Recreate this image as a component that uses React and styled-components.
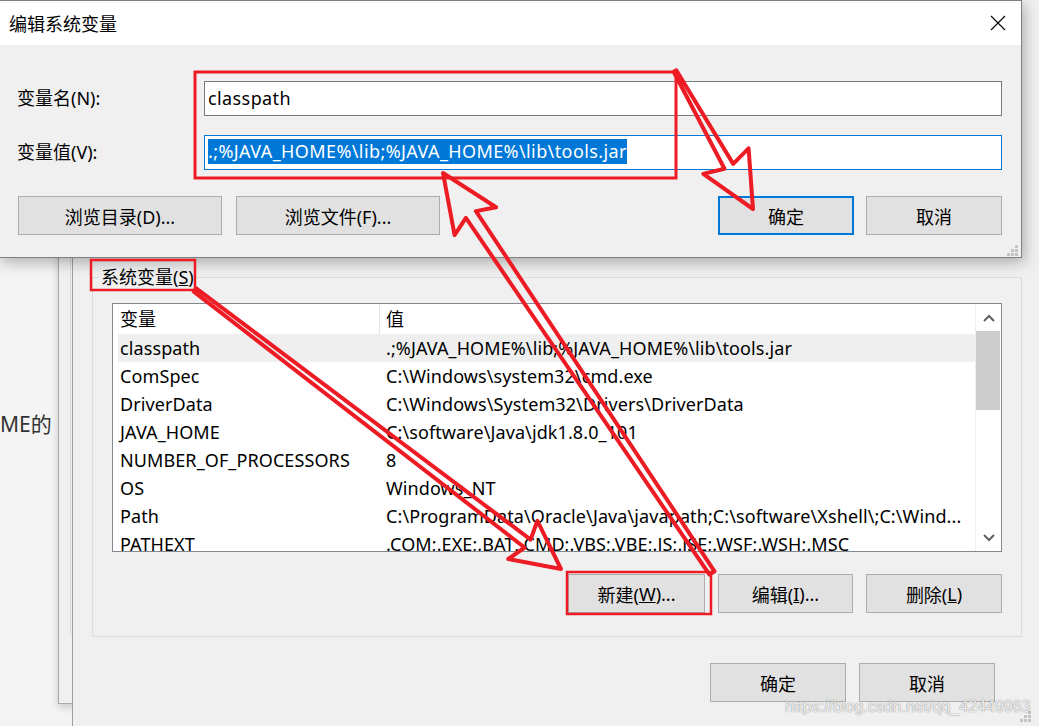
import React from "react";
import styled, { createGlobalStyle } from "styled-components";

const FONT = `"Segoe UI", "Noto Sans", "Noto Sans CJK SC", sans-serif`;
const RED = "#ed1c24";

const Global = createGlobalStyle`
  html, body { margin: 0; padding: 0; }
  body {
    width: 1039px; height: 726px; overflow: hidden;
    background: #f4f4f4; font-family: ${FONT}; color: #000;
  }
`;

const Desktop = styled.div`
  position: relative;
  width: 1039px;
  height: 726px;
  overflow: hidden;
  background: #f4f4f4;
`;

/* ---------- page behind ---------- */
const BackPage = styled.div`
  padding-top: 409px;
`;
const BackText = styled.p`
  margin: 0;
  font-size: 21px;
  line-height: 30px;
  color: #333;
`;

/* ---------- window A (behind) ---------- */
const WindowA = styled.div`
  position: absolute;
  left: 58px;
  top: 0;
  width: 200px;
  height: 704px;
  box-sizing: border-box;
  border-left: 1px solid #a9a9a9;
  border-bottom: 1px solid #a9a9a9;
  background: #f0f0f0;
  box-shadow: 0 3px 8px rgba(0, 0, 0, 0.18);
  z-index: 1;
`;
const InnerEdge = styled.div`
  margin-left: 11px;
  height: 635px;
  border-left: 1px solid #dadada;
`;

/* ---------- env vars window ---------- */
const EnvWindow = styled.div`
  position: absolute;
  left: 72px;
  top: 0;
  width: 1000px;
  height: 760px;
  box-sizing: border-box;
  border-left: 1px solid #a0a0a0;
  background: #f0f0f0;
  padding: 264px 0 0 19px;
  z-index: 2;
`;
const EnvContent = styled.div`
  width: 930px;
  display: flex;
  flex-direction: column;
`;
const GroupBox = styled.fieldset`
  margin: 0;
  min-width: 0;
  width: 930px;
  box-sizing: border-box;
  padding: 13px 19px 23px;
  border: 1px solid #dcdcdc;
`;
const GroupLegend = styled.legend`
  padding: 0 2px;
  margin-left: -13px;
  font-size: 18px;
  line-height: 26px;
  height: 26px;
`;
const ListView = styled.div`
  display: flex;
  width: 890px;
  height: 249px;
  box-sizing: border-box;
  border: 1px solid #828790;
  background: #fff;
`;
const ListMain = styled.div`
  flex: 1;
  min-width: 0;
  overflow: hidden;
  padding-left: 5px;
`;
const HeaderRow = styled.div`
  display: grid;
  grid-template-columns: 262px 1fr;
  height: 30px;
  font-size: 18px;
  line-height: 30px;
`;
const HeaderCell = styled.div`
  padding-left: ${(p) => (p.$first ? "2px" : "6px")};
  border-right: ${(p) => (p.$first ? "1px solid #e5e5e5" : "none")};
`;
const Row = styled.div`
  display: grid;
  grid-template-columns: 262px 1fr;
  height: 28px;
  line-height: 28px;
  font-size: 18px;
  letter-spacing: 0.1px;
  background: ${(p) => (p.$selected ? "#efefef" : "transparent")};
`;
const Cell = styled.div`
  padding-left: ${(p) => (p.$first ? "2px" : "6px")};
  white-space: nowrap;
  overflow: hidden;
`;
const ScrollBar = styled.div`
  width: 26px;
  display: flex;
  flex-direction: column;
  background: #fff;
  border-left: 1px solid #f0f0f0;
  box-sizing: border-box;
`;
const ScrollArrow = styled.div`
  height: 27px;
  display: flex;
  align-items: center;
  justify-content: center;
`;
const ScrollTrack = styled.div`
  flex: 1;
  padding: 0 1px 0 0;
`;
const ScrollThumb = styled.div`
  height: 79px;
  background: #cdcdcd;
`;
const ButtonRow = styled.div`
  display: flex;
  justify-content: flex-end;
  gap: 13px;
  margin-top: 22px;
`;
const Footer = styled.div`
  display: flex;
  justify-content: flex-end;
  gap: 13px;
  margin-top: 26px;
  padding-right: 27px;
`;
const Button = styled.div`
  width: ${(p) => p.$w || 136}px;
  height: 39px;
  box-sizing: border-box;
  border: ${(p) => (p.$primary ? "2px solid #0078d7" : "1px solid #adadad")};
  background: #e1e1e1;
  font-size: 18px;
  display: flex;
  align-items: center;
  justify-content: center;
  white-space: nowrap;
`;

/* ---------- edit dialog ---------- */
const Dialog = styled.div`
  position: absolute;
  left: -1px;
  top: 0;
  width: 1023px;
  height: 258px;
  box-sizing: border-box;
  border: 1px solid #808080;
  background: #f0f0f0;
  box-shadow: 2px 4px 14px rgba(0, 0, 0, 0.3);
  display: flex;
  flex-direction: column;
  z-index: 3;
`;
const TitleBar = styled.div`
  height: 44px;
  flex: none;
  background: #fff;
  display: flex;
  align-items: center;
  justify-content: space-between;
  padding-left: 9px;
`;
const Title = styled.div`
  font-size: 18px;
`;
const CloseButton = styled.div`
  width: 46px;
  height: 44px;
  display: flex;
  align-items: center;
  justify-content: center;
`;
const DialogBody = styled.div`
  flex: 1;
  padding: 36px 19px 0 17px;
`;
const FieldGrid = styled.div`
  display: grid;
  grid-template-columns: 187px 798px;
  row-gap: 19px;
  align-items: center;
`;
const Label = styled.div`
  font-size: 18px;
  padding-bottom: 3px;
`;
const TextInput = styled.div`
  height: 35px;
  box-sizing: border-box;
  border: 1px solid ${(p) => (p.$focused ? "#0078d7" : "#7a7a7a")};
  background: #fff;
  padding: 0 0 2px 3px;
  display: flex;
  align-items: center;
  font-size: 18px;
  letter-spacing: 0.4px;
  white-space: nowrap;
  overflow: hidden;
`;
const Selected = styled.span`
  display: inline-block;
  background: #0078d7;
  color: #fff;
  line-height: 25px;
`;
const DialogButtons = styled.div`
  display: flex;
  justify-content: space-between;
  margin-top: 26px;
  padding-left: 1px;
`;
const ButtonGroup = styled.div`
  display: flex;
  gap: ${(p) => p.$gap}px;
`;
const Grip = styled.svg`
  position: absolute;
  right: ${(p) => p.$r}px;
  bottom: ${(p) => p.$b}px;
`;
const GripFree = styled.svg`
  position: absolute;
  left: 1020px;
  top: 711px;
  z-index: 4;
`;
const Watermark = styled.div`
  position: absolute;
  left: 785px;
  top: 695px;
  font-family: "Liberation Sans", Arial, sans-serif;
  font-size: 16px;
  line-height: 24px;
  color: rgba(255, 255, 255, 0.85);
  text-shadow: 0 0 1px rgba(0, 0, 0, 0.45), 0 0 2px rgba(0, 0, 0, 0.15);
  z-index: 6;
`;
const Overlay = styled.svg`
  position: absolute;
  left: 0;
  top: 0;
  pointer-events: none;
  z-index: 10;
`;

/* ---------- helpers ---------- */
function hollowArrow([tx, ty], [px, py], { tail, shaft, head, len, notch }) {
  const dx = px - tx;
  const dy = py - ty;
  const L = Math.hypot(dx, dy);
  const ux = dx / L;
  const uy = dy / L;
  const nx = -uy;
  const ny = ux;
  const bx = px - ux * len;
  const by = py - uy * len;
  const jx = bx + ux * notch;
  const jy = by + uy * notch;
  const pts = [
    [tx + nx * tail, ty + ny * tail],
    [jx + nx * shaft, jy + ny * shaft],
    [bx + nx * head, by + ny * head],
    [px, py],
    [bx - nx * head, by - ny * head],
    [jx - nx * shaft, jy - ny * shaft],
    [tx - nx * tail, ty - ny * tail],
  ];
  return pts.map((p) => p.map((v) => v.toFixed(1)).join(",")).join(" ");
}

const GripDots = () => (
  <>
    <rect x="8" y="0" width="3" height="3" fill="#c3c3c3" />
    <rect x="4" y="4" width="3" height="3" fill="#c3c3c3" />
    <rect x="8" y="4" width="3" height="3" fill="#c3c3c3" />
    <rect x="0" y="8" width="3" height="3" fill="#c3c3c3" />
    <rect x="4" y="8" width="3" height="3" fill="#c3c3c3" />
    <rect x="8" y="8" width="3" height="3" fill="#c3c3c3" />
  </>
);

const Chevron = ({ up }) => (
  <svg width="12" height="8" viewBox="0 0 12 8">
    <polyline
      points={up ? "1,7 6,2 11,7" : "1,1 6,6 11,1"}
      fill="none"
      stroke="#606060"
      strokeWidth="2"
    />
  </svg>
);

const rows = [
  ["classpath", ".;%JAVA_HOME%\\lib;%JAVA_HOME%\\lib\\tools.jar"],
  ["ComSpec", "C:\\Windows\\system32\\cmd.exe"],
  ["DriverData", "C:\\Windows\\System32\\Drivers\\DriverData"],
  ["JAVA_HOME", "C:\\software\\Java\\jdk1.8.0_101"],
  ["NUMBER_OF_PROCESSORS", "8"],
  ["OS", "Windows_NT"],
  ["Path", "C:\\ProgramData\\Oracle\\Java\\javapath;C:\\software\\Xshell\\;C:\\Wind..."],
  ["PATHEXT", ".COM;.EXE;.BAT;.CMD;.VBS;.VBE;.JS;.JSE;.WSF;.WSH;.MSC"],
];

export default function App() {
  const arrowA = hollowArrow([675, 71], [753, 209], { tail: 1.5, shaft: 5, head: 26, len: 55, notch: 6 });
  const arrowB = hollowArrow([712, 573], [443, 173], { tail: 3, shaft: 6, head: 25, len: 58, notch: 8 });
  const arrowC = hollowArrow([195, 290], [561, 569], { tail: 2, shaft: 5, head: 24, len: 48, notch: 6 });

  return (
    <Desktop>
      <Global />
      <BackPage>
        <BackText>ME的</BackText>
      </BackPage>

      <WindowA>
        <InnerEdge />
      </WindowA>

      <EnvWindow>
        <EnvContent>
          <GroupBox>
            <GroupLegend>
              系统变量(<u>S</u>)
            </GroupLegend>
            <ListView>
              <ListMain>
                <HeaderRow>
                  <HeaderCell $first>变量</HeaderCell>
                  <HeaderCell>值</HeaderCell>
                </HeaderRow>
                {rows.map(([k, v], i) => (
                  <Row key={k} $selected={i === 0}>
                    <Cell $first>{k}</Cell>
                    <Cell>{v}</Cell>
                  </Row>
                ))}
              </ListMain>
              <ScrollBar>
                <ScrollArrow>
                  <Chevron up />
                </ScrollArrow>
                <ScrollTrack>
                  <ScrollThumb />
                </ScrollTrack>
                <ScrollArrow>
                  <Chevron />
                </ScrollArrow>
              </ScrollBar>
            </ListView>
            <ButtonRow>
              <Button $w={137}>
                新建(<u>W</u>)...
              </Button>
              <Button $w={135}>
                编辑(<u>I</u>)...
              </Button>
              <Button $w={136}>
                删除(<u>L</u>)
              </Button>
            </ButtonRow>
          </GroupBox>
          <Footer>
            <Button $w={136}>确定</Button>
            <Button $w={136}>取消</Button>
          </Footer>
        </EnvContent>
      </EnvWindow>
      <GripFree width="11" height="11" viewBox="0 0 11 11">
        <GripDots />
      </GripFree>

      <Dialog>
        <TitleBar>
          <Title>编辑系统变量</Title>
          <CloseButton>
            <svg width="16" height="16" viewBox="0 0 16 16">
              <path d="M1 1 L15 15 M15 1 L1 15" stroke="#000" strokeWidth="1.1" />
            </svg>
          </CloseButton>
        </TitleBar>
        <DialogBody>
          <FieldGrid>
            <Label>变量名(N):</Label>
            <TextInput>classpath</TextInput>
            <Label>变量值(V):</Label>
            <TextInput $focused>
              <Selected>.;%JAVA_HOME%\lib;%JAVA_HOME%\lib\tools.jar</Selected>
            </TextInput>
          </FieldGrid>
          <DialogButtons>
            <ButtonGroup $gap={14}>
              <Button $w={204}>浏览目录(D)...</Button>
              <Button $w={204}>浏览文件(F)...</Button>
            </ButtonGroup>
            <ButtonGroup $gap={12}>
              <Button $w={136} $primary>
                确定
              </Button>
              <Button $w={136}>取消</Button>
            </ButtonGroup>
          </DialogButtons>
        </DialogBody>
        <Grip $r={3} $b={1} width="11" height="11" viewBox="0 0 11 11">
          <GripDots />
        </Grip>
      </Dialog>

      <Watermark>https://blog.csdn.net/qq_42449963</Watermark>

      <Overlay width="1039" height="726" viewBox="0 0 1039 726">
        <g fill="none" stroke={RED}>
          <rect x="195" y="72" width="481" height="106" strokeWidth="3" />
          <rect x="91" y="260" width="104" height="30" strokeWidth="2.5" />
          <rect x="567" y="572" width="144" height="42" strokeWidth="2.5" />
          <g strokeWidth="4" strokeLinejoin="round">
            <polygon points={arrowA} />
            <polygon points={arrowB} />
            <polygon points={arrowC} />
          </g>
        </g>
      </Overlay>
    </Desktop>
  );
}
